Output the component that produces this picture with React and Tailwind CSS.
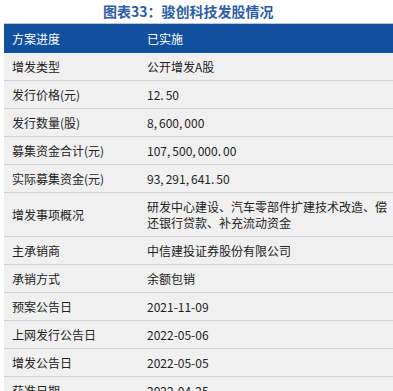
import React from "react";

const rows = [
  ["增发类型", "公开增发A股"],
  ["发行价格(元)", "12.50", true],
  ["发行数量(股)", "8,600,000", true],
  ["募集资金合计(元)", "107,500,000.00", true],
  ["实际募集资金(元)", "93,291,641.50", true],
  ["增发事项概况", "研发中心建设、汽车零部件扩建技术改造、偿还银行贷款、补充流动资金", false, true],
  ["主承销商", "中信建投证券股份有限公司"],
  ["承销方式", "余额包销"],
  ["预案公告日", "2021-11-09"],
  ["上网发行公告日", "2022-05-06"],
  ["增发公告日", "2022-05-05"],
  ["获准日期", "2022-04-25"],
];

function Num({ v }) {
  const parts = v.split(/([.,])/);
  return (
    <span>
      {parts.map((p, i) =>
        p === "." || p === "," ? (
          <span key={i} className="mr-[2px]">{p}</span>
        ) : (
          <span key={i}>{p}</span>
        )
      )}
    </span>
  );
}

export default function App() {
  return (
    <div
      className="w-[393px] h-[391px] overflow-hidden bg-white text-[#222]"
      style={{ fontFamily: '"Noto Sans CJK SC", "Noto Sans", sans-serif' }}
    >
      <div className="h-[23px] pl-[103px] text-[14px] leading-[23px] font-bold text-[#2b5ea7] whitespace-nowrap">
        图表33：骏创科技发股情况
      </div>
      <div className="ml-[4px] border-t border-[#b9c7dc]">
        <div className="flex h-[29px] items-center bg-[#11509e] text-white text-[12px]">
          <div className="w-[143px] pl-[8px]">方案进度</div>
          <div className="flex-1">已实施</div>
        </div>
        {rows.map(([k, v, num, two], i) => (
          <div
            key={i}
            className={
              "flex items-center bg-[#f0f0f0] border-b border-[#d0d0d0] text-[12px] " +
              (two ? "h-[44px] leading-[16px]" : "h-[28px] leading-[16px]")
            }
          >
            <div className="w-[143px] shrink-0 pl-[8px]">{k}</div>
            <div className="flex-1 pr-[3px]">{num ? <Num v={v} /> : v}</div>
          </div>
        ))}
      </div>
    </div>
  );
}
